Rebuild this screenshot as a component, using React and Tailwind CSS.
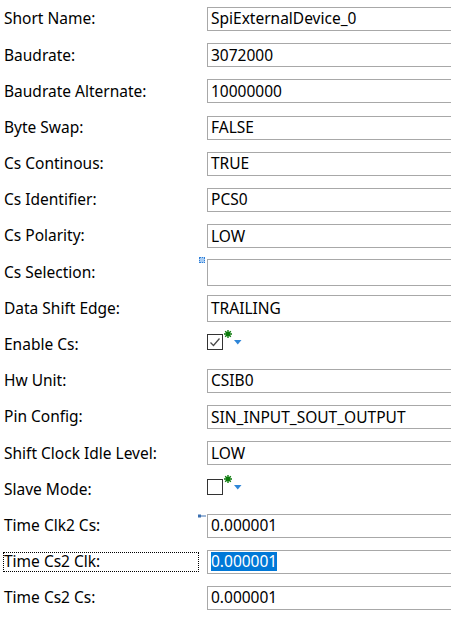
import React from "react";

const rows = [
  { label: "Short Name:", value: "SpiExternalDevice_0" },
  { label: "Baudrate:", value: "3072000" },
  { label: "Baudrate Alternate:", value: "10000000" },
  { label: "Byte Swap:", value: "FALSE" },
  { label: "Cs Continous:", value: "TRUE" },
  { label: "Cs Identifier:", value: "PCS0" },
  { label: "Cs Polarity:", value: "LOW" },
  { label: "Cs Selection:", value: "", tall: true, marker: "dot" },
  { label: "Data Shift Edge:", value: "TRAILING", tall: true },
  { label: "Enable Cs:", check: true, checked: true },
  { label: "Hw Unit:", value: "CSIB0" },
  { label: "Pin Config:", value: "SIN_INPUT_SOUT_OUTPUT" },
  { label: "Shift Clock Idle Level:", value: "LOW" },
  { label: "Slave Mode:", check: true, checked: false },
  { label: "Time Clk2 Cs:", value: "0.000001", marker: "pin" },
  { label: "Time Cs2 Clk:", value: "0.000001", focused: true },
  { label: "Time Cs2 Cs:", value: "0.000001" },
];

// little checkbox with the green "modified" star and dropdown arrow
const CheckField = ({ checked }) => (
  <div className="flex items-start h-[24px] pt-[1px]">
    <div className="w-[16px] h-[16px] border border-[#333] bg-white flex items-center justify-center">
      {checked && (
        <svg width="12" height="10" viewBox="0 0 12 10">
          <path d="M1.5 5.5 L4.5 8.5 L10.5 1.5" fill="none" stroke="#4a4a4a" strokeWidth="1.3" />
        </svg>
      )}
    </div>
    <svg width="8" height="8" viewBox="0 0 8 8" className="-mt-[4px] ml-[1px]">
      <path d="M4 0 V8 M0 4 H8 M1.2 1.2 L6.8 6.8 M6.8 1.2 L1.2 6.8" stroke="#0a7a0a" strokeWidth="1.4" />
    </svg>
    <svg width="8" height="5" viewBox="0 0 8 5" className="ml-[2px] mt-[6px]">
      <path d="M0 0 H7.5 L3.75 4.5 Z" fill="#2f86d8" />
    </svg>
  </div>
);

const Marker = ({ type }) => {
  if (type === "dot")
    return (
      <div className="absolute left-[-8px] top-[-2px] w-[6px] h-[6px] border border-dotted border-[#2f7fd8] bg-[#a9cdf3]" />
    );
  return (
    <svg width="9" height="6" viewBox="0 0 9 6" className="absolute left-[-10px] top-[0px]">
      <rect x="1" y="0.5" width="3" height="3" fill="#3a6fb0" />
      <line x1="4" y1="2" x2="9" y2="2" stroke="#3a6fb0" strokeWidth="1" />
    </svg>
  );
};

export default function App() {
  return (
    <div
      className="w-[451px] h-[644px] overflow-hidden bg-white pt-[1px] text-[15.5px] text-black"
      style={{ fontFamily: '"Noto Sans", "Liberation Sans", sans-serif' }}
    >
      {rows.map((r) => (
        <div key={r.label} className="h-[36.2px] flex items-center">
          <div className="w-[207px] flex-none pl-[3px]">
            <div
              className={`w-[196px] h-[20px] flex items-center border border-dotted leading-none ${
                r.focused ? "border-black" : "border-transparent"
              }`}
            >
              {r.label}
            </div>
          </div>
          <div className="relative flex-1 min-w-0">
            {r.marker && <Marker type={r.marker} />}
            {r.check ? (
              <CheckField checked={r.checked} />
            ) : (
              <div
                className={`w-[260px] ${r.tall ? "h-[27px]" : "h-[24px]"} border border-[#a8a8a8] bg-white flex items-center pl-[3px] whitespace-nowrap`}
              >
                {r.focused ? (
                  <span className="bg-[#0078d7] text-white leading-[19px]">{r.value}</span>
                ) : (
                  r.value
                )}
              </div>
            )}
          </div>
        </div>
      ))}
    </div>
  );
}
